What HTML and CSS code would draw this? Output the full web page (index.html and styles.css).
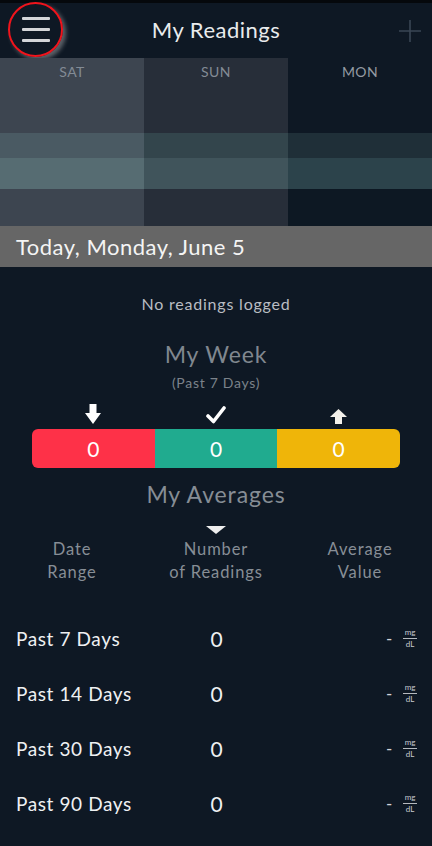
FILE: index.html
```html
<!DOCTYPE html>
<html lang="en">
<head>
<meta charset="utf-8">
<title>My Readings</title>
<link rel="stylesheet" href="styles.css">
</head>
<body>
<div class="app">
  <header class="topbar">
    <div class="topbar-left">
      <button class="menu-btn" aria-label="Menu">
        <span class="menu-line"></span>
        <span class="menu-line"></span>
        <span class="menu-line"></span>
      </button>
    </div>
    <h1 class="title">My Readings</h1>
    <div class="topbar-right">
      <svg class="plus" width="24" height="24" viewBox="0 0 24 24" aria-hidden="true">
        <path d="M12 1 V23 M1 12 H23" stroke="#3a4654" stroke-width="1.6" fill="none"/>
      </svg>
    </div>
  </header>

  <section class="chart">
    <div class="day day-sat"><span class="day-label">SAT</span></div>
    <div class="day day-sun"><span class="day-label">SUN</span></div>
    <div class="day day-mon"><span class="day-label">MON</span></div>
  </section>

  <div class="datebar">Today, Monday, June 5</div>

  <p class="empty">No readings logged</p>

  <h2 class="section-title week-title">My Week</h2>
  <p class="subtitle">(Past 7 Days)</p>

  <div class="week-icons">
    <svg width="16" height="20" viewBox="0 0 16 20" aria-hidden="true">
      <path d="M4.5 0 H11.5 V9 H16 L8 20 L0 9 H4.5 Z" fill="#ffffff"/>
    </svg>
    <svg width="20" height="18" viewBox="0 0 20 18" aria-hidden="true">
      <path d="M2 10 L7.5 15.5 L18 2" stroke="#ffffff" stroke-width="3.6" fill="none" stroke-linecap="round" stroke-linejoin="round"/>
    </svg>
    <svg width="17" height="15" viewBox="0 0 17 15" aria-hidden="true">
      <path d="M8.5 0 L17 8 H12 V15 H5 V8 H0 Z" fill="#f3f0ea"/>
    </svg>
  </div>

  <div class="week-bar">
    <div class="seg seg-low">0</div>
    <div class="seg seg-ok">0</div>
    <div class="seg seg-high">0</div>
  </div>

  <h2 class="section-title avg-title">My Averages</h2>
  <div class="sort-caret"></div>

  <div class="avg-head">
    <div>Date<br>Range</div>
    <div>Number<br>of Readings</div>
    <div>Average<br>Value</div>
  </div>

  <div class="avg-rows">
    <div class="avg-row">
      <span class="range">Past 7 Days</span>
      <span class="count">0</span>
      <span class="value"><span class="dash">-</span><span class="unit"><span class="unit-top">mg</span><span class="unit-bot">dL</span></span></span>
    </div>
    <div class="avg-row">
      <span class="range">Past 14 Days</span>
      <span class="count">0</span>
      <span class="value"><span class="dash">-</span><span class="unit"><span class="unit-top">mg</span><span class="unit-bot">dL</span></span></span>
    </div>
    <div class="avg-row">
      <span class="range">Past 30 Days</span>
      <span class="count">0</span>
      <span class="value"><span class="dash">-</span><span class="unit"><span class="unit-top">mg</span><span class="unit-bot">dL</span></span></span>
    </div>
    <div class="avg-row">
      <span class="range">Past 90 Days</span>
      <span class="count">0</span>
      <span class="value"><span class="dash">-</span><span class="unit"><span class="unit-top">mg</span><span class="unit-bot">dL</span></span></span>
    </div>
  </div>
</div>
</body>
</html>
```

FILE: styles.css
```css
* { box-sizing: border-box; }

html, body {
  margin: 0;
  padding: 0;
  background: #0e1824;
}

body {
  font-family: Lato, "Open Sans", sans-serif;
  color: #ffffff;
  width: 432px;
  height: 846px;
  overflow: hidden;
}

.app {
  display: flex;
  flex-direction: column;
}

.topbar {
  height: 58px;
  border-top: 3px solid #05080c;
  display: grid;
  grid-template-columns: 1fr auto 1fr;
  align-items: center;
  background: #0e1824;
}

.topbar-left { display: flex; padding-left: 8px; margin-top: -2px; }
.topbar-right { display: flex; justify-content: flex-end; padding-right: 10px; }

.menu-btn {
  width: 55px;
  height: 55px;
  border-radius: 50%;
  border: 2.5px solid #f0141c;
  background: transparent;
  box-shadow: 3px 3px 4px rgba(190, 190, 190, 0.45);
  display: flex;
  flex-direction: column;
  align-items: center;
  justify-content: center;
  gap: 8px;
  padding: 0;
}

.menu-line {
  display: block;
  width: 28px;
  height: 3px;
  background: #d4d6d9;
  border-radius: 1px;
}

.title {
  margin: 0;
  font-size: 22px;
  font-weight: 400;
  color: #e9ebed;
  letter-spacing: 0.5px;
  margin-top: -2px;
}

.plus { display: block; }

.chart {
  height: 168px;
  display: grid;
  grid-template-columns: 1fr 1fr 1fr;
}

.day {
  display: flex;
  justify-content: center;
  padding-top: 6px;
}

.day-label {
  font-size: 14px;
  letter-spacing: 0.4px;
  color: #838b95;
  line-height: 16px;
}

.day-sat {
  background: linear-gradient(to bottom,
    #3d4550 0, #3d4550 75px,
    #4a5a63 75px, #4a5a63 100px,
    #566c72 100px, #566c72 131px,
    #3d4550 131px);
}
.day-sun {
  background: linear-gradient(to bottom,
    #272e39 0, #272e39 75px,
    #33454c 75px, #33454c 100px,
    #40545b 100px, #40545b 131px,
    #272e39 131px);
}
.day-mon {
  background: linear-gradient(to bottom,
    #0e1824 0, #0e1824 75px,
    #1f2f38 75px, #1f2f38 100px,
    #2c434b 100px, #2c434b 131px,
    #0d1823 131px);
}
.day-mon .day-label { color: #949ba3; }

.datebar {
  height: 41px;
  background: #666666;
  color: #f4f4f4;
  font-size: 22px;
  line-height: 41px;
  padding-left: 16px;
  letter-spacing: 0.5px;
}

.empty {
  margin: 27px 0 0;
  text-align: center;
  font-size: 16px;
  line-height: 20px;
  letter-spacing: 0.8px;
  color: #b9bdc3;
}

.section-title {
  margin: 0;
  text-align: center;
  font-weight: 400;
  font-size: 23px;
  line-height: 30px;
  letter-spacing: 0.9px;
  color: #80878f;
}

.week-title { margin-top: 25px; }

.subtitle {
  margin: 5px 0 0;
  text-align: center;
  font-size: 14px;
  line-height: 18px;
  letter-spacing: 0.7px;
  color: #7b828a;
}

.week-icons {
  margin: 8px 32px 0;
  height: 24px;
  display: grid;
  grid-template-columns: 1fr 1fr 1fr;
  justify-items: center;
  align-items: end;
}

.week-bar {
  margin: 5px 32px 0;
  height: 39px;
  display: grid;
  grid-template-columns: 1fr 1fr 1fr;
  border-radius: 6px;
  overflow: hidden;
}

.seg {
  display: flex;
  align-items: center;
  justify-content: center;
  font-size: 21px;
  color: #ffffff;
}
.seg-low { background: #fe3148; }
.seg-ok { background: #20ab8f; }
.seg-high { background: #efb509; }

.avg-title { margin-top: 11px; color: #868d95; }

.sort-caret {
  align-self: center;
  margin-top: 17px;
  width: 0;
  height: 0;
  border-left: 10px solid transparent;
  border-right: 10px solid transparent;
  border-top: 8px solid #eeeeee;
}

.avg-head {
  margin-top: 4px;
  display: grid;
  grid-template-columns: 1fr 1fr 1fr;
  text-align: center;
  font-size: 16.5px;
  line-height: 23px;
  letter-spacing: 0.9px;
  color: #878e96;
}

.avg-rows {
  margin-top: 27px;
  display: flex;
  flex-direction: column;
}

.avg-row {
  height: 55px;
  display: grid;
  grid-template-columns: 1fr 1fr 1fr;
  align-items: center;
  padding: 0 15px 0 16px;
  font-size: 19px;
  letter-spacing: 0.6px;
  color: #eef0f2;
}

.count { text-align: center; font-size: 21px; letter-spacing: 0; }

.value {
  display: flex;
  justify-content: flex-end;
  align-items: center;
  gap: 10px;
}

.dash { font-size: 17px; color: #d0d3d7; }

.unit {
  display: flex;
  flex-direction: column;
  align-items: center;
  font-size: 8px;
  line-height: 9px;
  letter-spacing: 0;
  color: #c7cbd0;
  width: 14px;
}

.unit-top {
  border-bottom: 1px solid #b5b9be;
  padding-bottom: 1px;
  width: 100%;
  text-align: center;
}

.unit-bot { padding-top: 1px; }
```
